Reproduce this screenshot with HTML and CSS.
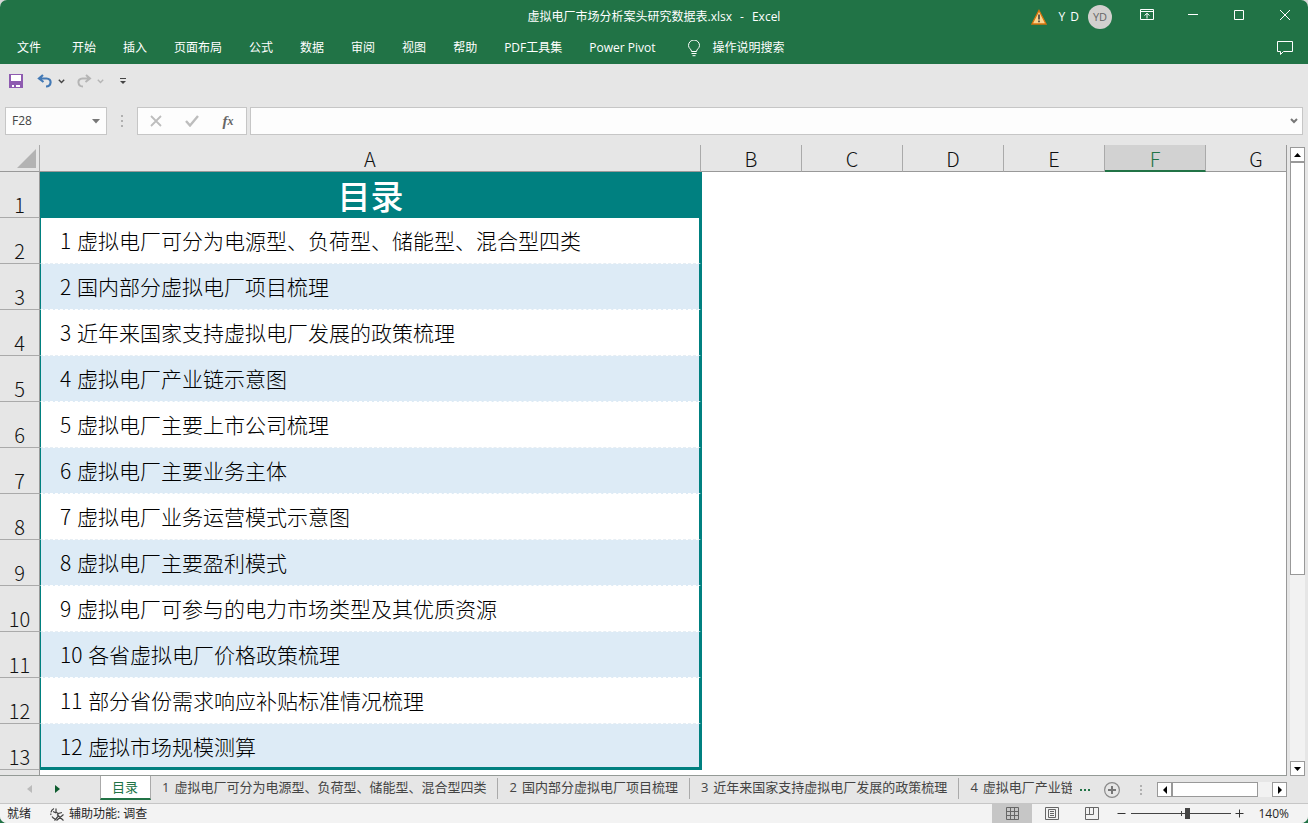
FILE: index.html
```html
<!DOCTYPE html>
<html lang="zh-CN">
<head>
<meta charset="utf-8">
<title>虚拟电厂市场分析案头研究数据表.xlsx - Excel</title>
<link rel="stylesheet" href="styles.css">
</head>
<body>
<div class="window">
  <header class="top">
    <div class="titlebar">
      <div class="doc-title"><span>虚拟电厂市场分析案头研究数据表.xlsx</span><span>-</span><span>Excel</span></div>
      <div class="account">
        <svg class="warn" width="16" height="16" viewBox="0 0 16 16"><path d="M8 1.5 15 15H1z" fill="#fbd58d" stroke="#d9730d" stroke-width="1.3"/><path d="M8 5.5v5M8 11.500v1.800" stroke="#333" stroke-width="1.5"/></svg>
        <span class="user"><span>Y</span><span>D</span></span>
        <span class="avatar">YD</span>
      </div>
      <div class="win-buttons">
        <button aria-label="功能区显示选项"><svg width="14" height="12" viewBox="0 0 14 12"><path d="M.5.5h13v10H.5zM.5 2.500h13M7 9.500V4.500M4.500 6.500 7 4.300l2.500 2.200" /></svg></button>
        <button aria-label="最小化"><svg width="12" height="12" viewBox="0 0 12 12"><path d="M1 5.500h10"/></svg></button>
        <button aria-label="最大化"><svg width="12" height="12" viewBox="0 0 12 12"><path d="M1.500 1.500h9v9h-9z"/></svg></button>
        <button aria-label="关闭"><svg width="12" height="12" viewBox="0 0 12 12"><path d="m1 1 10 10M11 1 1 11"/></svg></button>
      </div>
    </div>
    <nav class="menu">
      <button class="file">文件</button>
      <button>开始</button>
      <button>插入</button>
      <button>页面布局</button>
      <button>公式</button>
      <button>数据</button>
      <button>审阅</button>
      <button>视图</button>
      <button>帮助</button>
      <button>PDF工具集</button>
      <button>Power Pivot</button>
      <button class="tell"><svg width="14" height="17" viewBox="0 0 14 17"><path d="M4.500 11.500C4.500 9 1.500 8.500 1.500 5.500a5 5 0 0 1 11-0C12.500 8.500 9.500 9 9.500 11.500zM4.500 13.500h5M5.500 15.700h3"/></svg>操作说明搜索</button>
      <button class="comment" aria-label="批注"><svg width="18" height="16" viewBox="0 0 18 16"><path d="M1.500 1.500h15v10H7.500l-3 3v-3h-3z"/></svg></button>
    </nav>
  </header>

  <div class="quick">
    <button aria-label="保存"><svg width="14" height="14" viewBox="0 0 14 14"><path fill="#8e5bb0" d="M0 0h14v14H0z"/><path fill="#fff" d="M2 1h10v6H2zM3 9h8v4H3z"/><path fill="#8e5bb0" d="M3 9h8v2H3zM5 11h2v2H5z"/></svg></button>
    <button class="undo" aria-label="撤消"><svg width="16" height="14" viewBox="0 0 16 14"><path d="M6 1 2 4.500 6.500 8M2.500 4.500h7c6 0 5 8-.5 8" fill="none" stroke="#4379b5" stroke-width="2.200"/></svg></button>
    <button class="arrow" aria-label="撤消列表"><svg width="7" height="5" viewBox="0 0 7 5"><path d="m.8.8 2.700 2.700L6.200.8" fill="none" stroke="#444" stroke-width="1.400"/></svg></button>
    <button class="redo" aria-label="恢复"><svg width="16" height="14" viewBox="0 0 16 14"><path d="m10 1 4 3.500L9.500 8M13.500 4.500h-7c-6 0-5 8 .5 8" fill="none" stroke="#b5b5b5" stroke-width="2"/></svg></button>
    <button class="arrow" aria-label="恢复列表"><svg width="7" height="5" viewBox="0 0 7 5"><path d="m.8.8 2.700 2.700L6.200.8" fill="none" stroke="#b5b5b5" stroke-width="1.400"/></svg></button>
    <button class="custom" aria-label="自定义快速访问工具栏"><svg width="6" height="7" viewBox="0 0 6 7"><path d="M0 .5h6" stroke="#444"/><path d="M0 3h6L3 6z" fill="#444"/></svg></button>
  </div>

  <div class="formula">
    <div class="namebox">
      <input value="F28" aria-label="名称框">
      <button aria-label="名称列表"><svg width="8" height="5" viewBox="0 0 8 5"><path d="M0 0h8L4 4.500z" fill="#777"/></svg></button>
    </div>
    <svg class="grip" width="2" height="12" viewBox="0 0 2 12"><path d="M0 0h2v2H0zM0 5h2v2H0zM0 10h2v2H0z"/></svg>
    <div class="fx">
      <button aria-label="取消"><svg width="12" height="12" viewBox="0 0 12 12"><path d="m1 1 10 10M11 1 1 11" fill="none" stroke="#bdbdbd" stroke-width="1.800"/></svg></button>
      <button aria-label="输入"><svg width="14" height="12" viewBox="0 0 14 12"><path d="m1 6 4 4.500L13 1" fill="none" stroke="#bdbdbd" stroke-width="2.400"/></svg></button>
      <button class="fn" aria-label="插入函数"><i>f</i><sub>x</sub></button>
    </div>
    <div class="editbox">
      <input aria-label="编辑栏">
      <button aria-label="展开编辑栏"><svg width="8" height="6" viewBox="0 0 8 6"><path d="m1 1 3 3 3-3" fill="none" stroke="#777" stroke-width="2"/></svg></button>
    </div>
  </div>

  <main class="work">
    <div class="sheet">
      <table>
        <colgroup><col class="c-head"><col class="c-a"><col class="c-n"><col class="c-n"><col class="c-n"><col class="c-n"><col class="c-n"><col></colgroup>
        <thead>
          <tr><th class="corner"><svg width="19" height="19" viewBox="0 0 19 19"><path d="M19 0v19H0z" fill="#b3b3b3"/></svg></th><th>A</th><th>B</th><th>C</th><th>D</th><th>E</th><th class="sel">F</th><th class="last">G</th></tr>
        </thead>
        <tbody>
          <tr><th>1</th><td class="title">目录</td><td colspan="6"></td></tr>
          <tr><th>2</th><td class="item"><span class="no">1 </span>虚拟电厂可分为电源型、负荷型、储能型、混合型四类</td><td colspan="6"></td></tr>
          <tr><th>3</th><td class="item band"><span class="no">2 </span>国内部分虚拟电厂项目梳理</td><td colspan="6"></td></tr>
          <tr><th>4</th><td class="item"><span class="no">3 </span>近年来国家支持虚拟电厂发展的政策梳理</td><td colspan="6"></td></tr>
          <tr><th>5</th><td class="item band"><span class="no">4 </span>虚拟电厂产业链示意图</td><td colspan="6"></td></tr>
          <tr><th>6</th><td class="item"><span class="no">5 </span>虚拟电厂主要上市公司梳理</td><td colspan="6"></td></tr>
          <tr><th>7</th><td class="item band"><span class="no">6 </span>虚拟电厂主要业务主体</td><td colspan="6"></td></tr>
          <tr><th>8</th><td class="item"><span class="no">7 </span>虚拟电厂业务运营模式示意图</td><td colspan="6"></td></tr>
          <tr><th>9</th><td class="item band"><span class="no">8 </span>虚拟电厂主要盈利模式</td><td colspan="6"></td></tr>
          <tr><th>10</th><td class="item"><span class="no">9 </span>虚拟电厂可参与的电力市场类型及其优质资源</td><td colspan="6"></td></tr>
          <tr><th>11</th><td class="item band"><span class="no">10 </span>各省虚拟电厂价格政策梳理</td><td colspan="6"></td></tr>
          <tr><th>12</th><td class="item"><span class="no">11 </span>部分省份需求响应补贴标准情况梳理</td><td colspan="6"></td></tr>
          <tr><th>13</th><td class="item band end"><span class="no">12 </span>虚拟市场规模测算</td><td colspan="6"></td></tr>
          <tr><th></th><td></td><td colspan="6"></td></tr>
        </tbody>
      </table>
    </div>
    <div class="vscroll">
      <button aria-label="向上滚动"><svg width="7" height="4" viewBox="0 0 7 4"><path d="M3.500 0 7 4H0z"/></svg></button>
      <div class="vtrack"><div class="vthumb"></div></div>
      <button aria-label="向下滚动"><svg width="7" height="4" viewBox="0 0 7 4"><path d="M0 0h7L3.500 4z"/></svg></button>
    </div>
  </main>

  <div class="tabs">
    <div class="tabnav">
      <button aria-label="上一个"><svg width="5" height="8" viewBox="0 0 5 8"><path d="M5 0v8L0 4z" fill="#bbb"/></svg></button>
      <button aria-label="下一个"><svg width="5" height="8" viewBox="0 0 5 8"><path d="M0 0v8l5-4z" fill="#0e5c2f"/></svg></button>
    </div>
    <div class="tablist">
      <button class="active">目录</button>
      <button><span>1</span>虚拟电厂可分为电源型、负荷型、储能型、混合型四类</button>
      <button><span>2</span>国内部分虚拟电厂项目梳理</button>
      <button><span>3</span>近年来国家支持虚拟电厂发展的政策梳理</button>
      <button class="cut"><span>4</span>虚拟电厂产业链</button>
    </div>
    <div class="tabtools">
      <button class="more" aria-label="更多工作表"><svg width="11" height="2" viewBox="0 0 11 2"><path d="M0 0h2v2H0zM4 0h2v2H4zM8 0h2v2H8z" fill="#217346"/></svg></button>
      <button class="add" aria-label="新工作表"><svg width="16" height="16" viewBox="0 0 16 16"><circle cx="8" cy="8" r="7.400" fill="none" stroke="#8a8a8a" stroke-width="1.200"/><path d="M8 4v8M4 8h8" stroke="#777" stroke-width="2"/></svg></button>
      <svg class="grip" width="2" height="10" viewBox="0 0 2 10"><path d="M0 0h2v2H0zM0 4h2v2H0zM0 8h2v2H0z"/></svg>
      <div class="hscroll">
        <button aria-label="向左滚动"><svg width="4" height="8" viewBox="0 0 4 8"><path d="M4 0v8L0 4z"/></svg></button>
        <div class="htrack"><div class="hthumb"></div></div>
        <button aria-label="向右滚动"><svg width="4" height="8" viewBox="0 0 4 8"><path d="M0 0v8l4-4z"/></svg></button>
      </div>
    </div>
  </div>

  <footer class="status">
    <span class="ready">就绪</span>
    <button class="access"><svg width="17" height="16" viewBox="0 0 17 16"><path d="M5 2.500A5.500 5.500 0 0 0 2 9M3 10.500a6 6 0 0 0 3 2.500" stroke-width="1.200" stroke-dasharray="5 1"/><path d="M4 5.500 7 7M7 2.500v3.500l2 1.500 4-1M9 7.500v3l-3.500 4M10 10.500l4.500 4M8 8.500l6 5.500M14.500 8.500l-7 6" stroke-width="1.200"/></svg>辅助功能: 调查</button>
    <div class="views">
      <button class="on" aria-label="普通"><svg width="13" height="13" viewBox="0 0 13 13"><path d="M.5.5h12v12H.5zM4.500.5v12M8.500.5v12M.5 4.500h12M.5 8.500h12"/></svg></button>
      <button aria-label="页面布局"><svg width="14" height="13" viewBox="0 0 14 13"><path d="M.5.5h13v12H.5zM3.500 2.500h7v8h-7zM5 4.500h4M5 6.500h4M5 8.500h4"/></svg></button>
      <button aria-label="分页预览"><svg width="14" height="13" viewBox="0 0 14 13"><path d="M.5.5h13v12H.5zM.5 7.500h8v-7M4.500.5v7"/></svg></button>
    </div>
    <div class="zoom">
      <button aria-label="缩小"><svg width="9" height="9" viewBox="0 0 9 9"><path d="M.5 4.500h8"/></svg></button>
      <input type="range" min="0" max="100" value="56" aria-label="缩放">
      <button aria-label="放大"><svg width="9" height="9" viewBox="0 0 9 9"><path d="M.5 4.500h8M4.500.5v8"/></svg></button>
      <button class="percent">140%</button>
    </div>
  </footer>
</div>
</body>
</html>
```
FILE: styles.css
```css
* { box-sizing: border-box; }
html { background: linear-gradient(#d8d8d8 50%, #217346 50%); height: 100%; }
body {
  margin: 0;
  height: 100%;
  font: 12px/16px "Open Sans", "Noto Sans CJK SC", sans-serif;
  color: #262626;
}
button {
  display: flex;
  align-items: center;
  justify-content: center;
  margin: 0;
  padding: 0;
  border: 0;
  background: none;
  font: inherit;
  color: inherit;
  white-space: nowrap;
}
input { font: inherit; color: inherit; border: 0; margin: 0; padding: 0; background: none; min-width: 0; outline: 0; }
svg { display: block; flex: none; }

.window {
  display: flex;
  flex-direction: column;
  height: 100vh;
  background: #e6e6e6;
  border-radius: 7px;
  overflow: hidden;
}

/* title bar and ribbon tabs */
.top { background: #217346; color: #fff; flex: none; }
.top button svg { fill: none; stroke: #fff; }
.titlebar { display: grid; grid-template-columns: 1fr auto 1fr; height: 32px; align-items: center; position: relative; }
.doc-title { grid-column: 2; display: flex; gap: 8px; padding-top: 2px; }
.account { grid-column: 3; justify-self: end; display: flex; align-items: center; margin-right: 196px; padding-top: 1px; }
.user { display: flex; gap: 5px; margin: 0 9px 0 12px; }
.avatar { width: 24px; height: 24px; border-radius: 50%; background: #d2d0ce; color: #666; font-size: 11px; line-height: 24px; text-align: center; }
.win-buttons { position: absolute; top: 0; right: 0; display: flex; height: 30px; }
.win-buttons button { width: 46px; }
.menu { display: flex; height: 32px; padding: 0 14px 0 17px; align-items: center; gap: 27px; }
.menu .file { margin-right: 4px; }
.menu .tell { gap: 12px; margin-left: 4px; }
.menu .comment { margin-left: auto; }

/* quick access toolbar */
.quick { display: flex; align-items: center; height: 34px; padding-left: 9px; flex: none; }
.quick .undo { margin-left: 14px; }
.quick .arrow { margin-left: 5px; }
.quick .redo { margin-left: 11px; }
.quick .custom { margin-left: 16px; }

/* formula bar */
.formula { display: flex; height: 28px; margin: 9px 5px 10px; flex: none; }
.namebox, .fx, .editbox { display: flex; background: #fdfdfd; border: 1px solid #c6c6c6; }
.namebox { width: 102px; padding: 0 6px; }
.namebox input { flex: 1; color: #444; }
.grip { align-self: center; margin: 0 14px; fill: #b0b0b0; }
.fx { width: 110px; }
.fx button { flex: 1; }
.fx .fn { font: italic bold 15px/18px "Liberation Serif", serif; color: #666; }
.fn sub { font-size: 12px; line-height: 12px; }
.editbox { flex: 1; margin-left: 3px; padding-right: 4px; }
.editbox input { flex: 1; }

/* grid */
.work { flex: 1; display: flex; min-height: 0; }
.sheet { flex: 1; overflow: hidden; background: linear-gradient(#e6e6e6 27px, #fff 27px); border-right: 1px solid #999; border-bottom: 1px solid #949a96; min-width: 0; }
table { width: 100%; table-layout: fixed; border-collapse: separate; border-spacing: 0; font-family: "Noto Sans CJK SC", sans-serif; }
.c-head { width: 40px; }
.c-a { width: 661px; }
.c-n { width: 101px; }
th, td { padding: 0; height: 46px; }
th { font-weight: 300; font-size: 20px; line-height: 24px; color: #111; background: #e6e6e6; }
thead th { height: 27px; border-bottom: 1px solid #999; border-right: 1px solid #aaa; padding-top: 2px; }
thead .last { border-right: 0; padding-left: 20px; }
thead .sel { background: #d2d2d2; color: #217346; border-bottom: 2px solid #217346; line-height: 23px; }
thead .corner { padding-top: 0; }
.corner svg { margin: 0 3px 0 auto; }
tbody th { border-right: 1px solid #999; border-bottom: 1px solid #aaa; vertical-align: bottom; }
tbody tr:last-child th, tbody tr:last-child td { height: 8px; border-bottom: 0; }
.title { background: #008080; color: #fff; font-size: 33px; line-height: 36px; font-weight: 500; text-align: center; box-shadow: 1px 0 #008080; }
.item {
  font-size: 21px;
  line-height: 30px;
  font-weight: 300;
  color: #000;
  padding-left: 19px;
  padding-bottom: 1px;
  border-left: 1px solid #008080;
  border-right: 2px solid #008080;
  border-bottom: 1px dashed #e6eef4;
  box-shadow: 1px 0 #008080;
  background: #fff;
  white-space: nowrap;
}
.no { margin-right: 1px; }
.band { background: #ddebf6; border-bottom-color: #fff; }
.end { border-bottom: 3px solid #008080; padding-bottom: 0; }

/* scroll bars */
.vscroll { width: 21px; padding: 2px 3px 0; display: flex; flex-direction: column; }
.vscroll button, .hscroll button { width: 15px; height: 15px; border: 1px solid #999; background: #fff; flex: none; }
.vtrack { flex: 1; background: #f2f2f2; }
.vthumb { height: 69%; background: #fff; border: 1px solid #999; }

/* sheet tabs */
.tabs { display: flex; height: 27px; flex: none; font-size: 13px; line-height: 18px; color: #444; }
.tabnav { width: 100px; display: flex; flex: none; padding: 0 40px 2px 27px; justify-content: space-between; }
.tablist { flex: 1; display: flex; align-items: flex-start; overflow: hidden; min-width: 0; }
.tablist button { flex: none; height: 21px; margin-top: 2px; padding: 0 11px 3px; border-right: 1px solid #aaa; gap: 5px; }
.tablist .active { height: 24px; margin: 0; background: #fff; color: #217346; border-left: 1px solid #aaa; border-bottom: 2px solid #217346; padding: 0 12px 0 11px; }
.tablist .cut { padding-right: 0; border-right: 0; }
.tabtools { display: flex; align-items: center; flex: none; padding: 0 21px 0 8px; }
.add { margin-left: 13px; }
.tabtools .grip { margin: 0 15px 0 20px; }
.hscroll { display: flex; width: 130px; }
.htrack { flex: 1; background: #f2f2f2; }
.hthumb { width: 86%; height: 15px; background: #fff; border: 1px solid #999; }

/* status bar */
.status { display: flex; height: 20px; flex: none; background: #f3f3f3; border-top: 1px solid #c6c6c6; align-items: center; padding-left: 7px; }
.access { margin-left: 18px; gap: 3px; }
.access svg { fill: none; stroke: #444; }
.views { margin-left: auto; display: flex; align-self: stretch; }
.views button { width: 40px; }
.views svg { fill: none; stroke: #666; }
.views .on { background: #c6c6c6; }
.zoom { display: flex; align-items: center; margin-left: 5px; padding-right: 19px; }
.zoom svg { fill: none; stroke: #333; }
.zoom input { appearance: none; width: 100px; height: 16px; margin: 0 4px 0 5px; background: linear-gradient(#444, #444) center / 100% 1px no-repeat, linear-gradient(#444, #444) center / 1px 5px no-repeat; }
.zoom input::-webkit-slider-thumb { appearance: none; width: 5px; height: 11px; background: #444; }
.percent { margin-left: 14px; }
```
